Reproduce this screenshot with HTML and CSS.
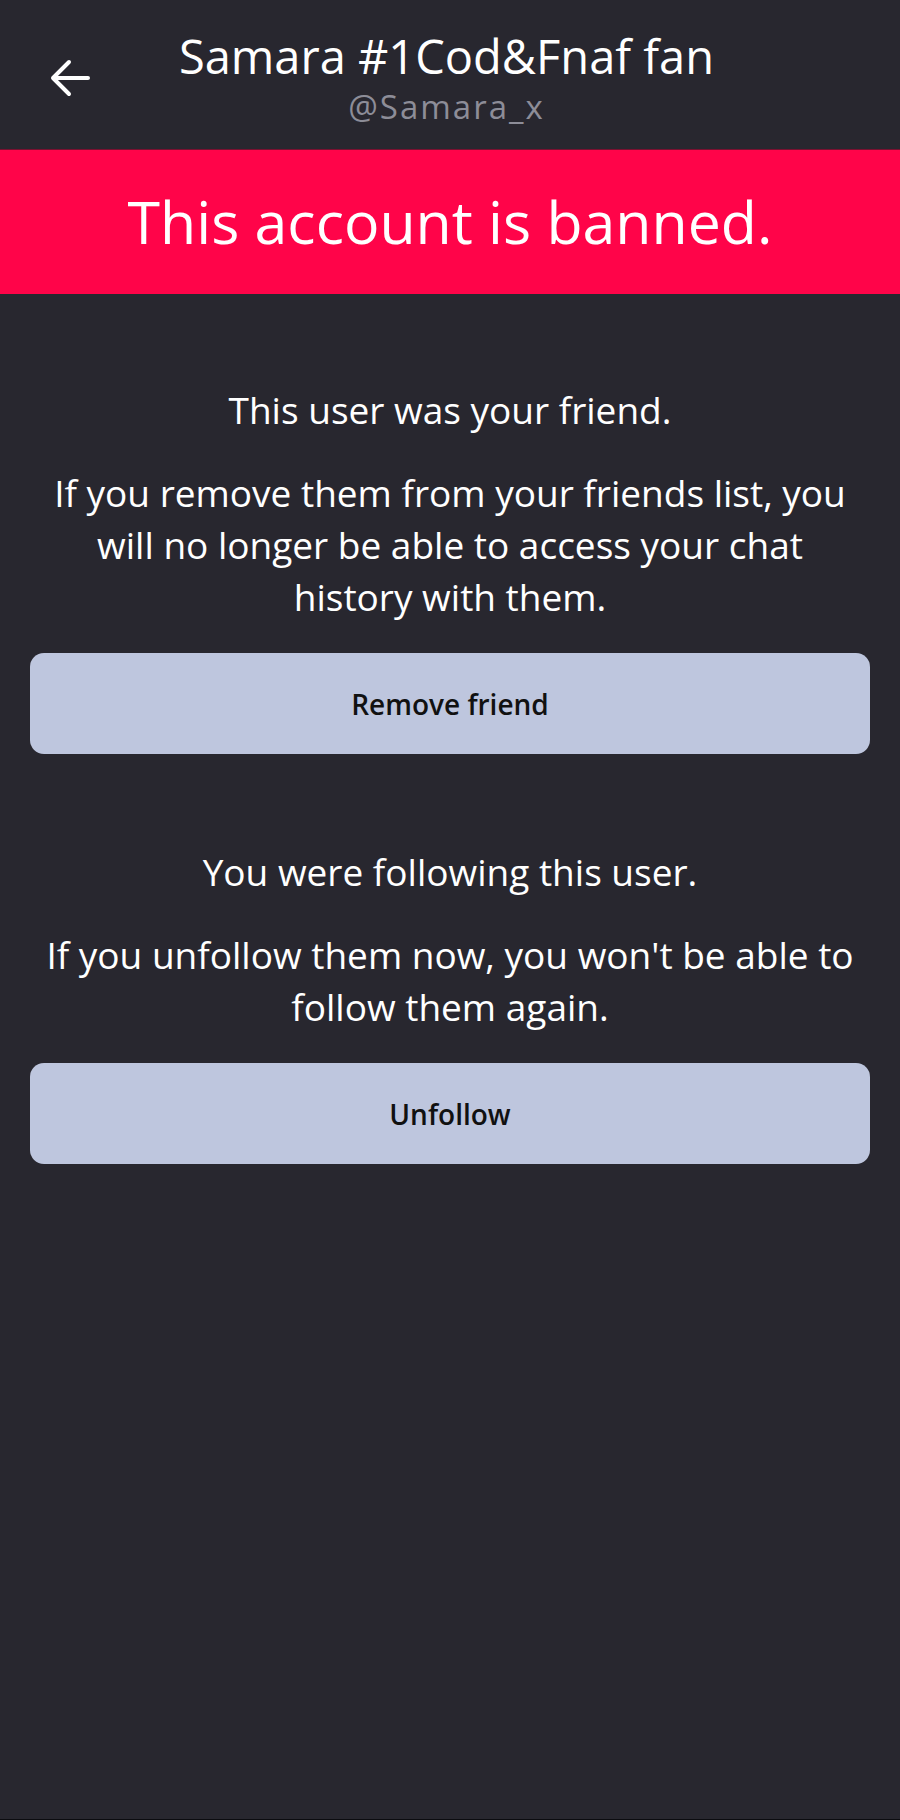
FILE: index.html
```html
<!DOCTYPE html>
<html lang="en">
<head>
    <meta charset="UTF-8">
    <meta name="viewport" content="width=device-width, initial-scale=1.0">
    <title>Samara #1Cod&amp;Fnaf fan</title>
    <link rel="stylesheet" href="styles.css">
</head>
<body>
    <div class="header">
        <div class="back">
            <svg width="40" height="40" viewBox="0 0 40 40">
                <path d="M38 20H3M19 4L3 20l16 16" fill="none" stroke="#fff" stroke-width="4" stroke-linecap="round" stroke-linejoin="round"/>
            </svg>
        </div>
        <div class="title-block">
            <div class="title">Samara #1Cod&amp;Fnaf fan</div>
            <div class="handle">@Samara_x</div>
        </div>
        <div></div>
    </div>

    <!-- Banned banner -->
    <div class="banner">This account is banned.</div>

    <div class="content">
        <div class="section">
            <p class="lead">This user was your friend.</p>
            <p class="info">If you remove them from your friends list, you will no longer be able to access your chat history with them.</p>
            <button class="action">Remove friend</button>
        </div>

        <div class="section">
            <p class="lead">You were following this user.</p>
            <p class="info">If you unfollow them now, you won't be able to follow them again.</p>
            <button class="action">Unfollow</button>
        </div>
    </div>
</body>
</html>
```

FILE: styles.css
```css
html, body {
    height: 100%;
}
body {
    margin: 0;
    background-color: #28272f;
    color: white;
    font-family: "Open Sans", Lato, sans-serif;
    text-align: center;
    border-bottom: 1px solid #0c0c10;
    box-sizing: border-box;
}
.header {
    height: 149px;
    box-sizing: border-box;
    padding-top: 30px;
    display: grid;
    grid-template-columns: 1fr auto 1fr;
}
.back {
    padding-left: 50px;
    padding-top: 28px;
    text-align: left;
}
.title-block {
    margin-right: 7px;
}
.title {
    font-size: 47px;
    line-height: 52px;
}
.handle {
    margin-top: 7px;
    font-size: 33px;
    line-height: 36px;
    letter-spacing: 2px;
    color: #8d8d98;
}
.banner {
    background-color: #ff0449;
    height: 145px;
    line-height: 142px;
    font-size: 59px;
    border-top: 1px solid #7a1030;
    box-sizing: border-box;
}
.content {
    padding: 90px 30px 0;
}
.section {
    margin-bottom: 92px;
}
.lead, .info {
    margin: 0;
    font-size: 37px;
    line-height: 52px;
}
.info {
    margin: 31px 10px 0;
}
.action {
    display: block;
    width: 100%;
    height: 101px;
    margin-top: 30px;
    border: none;
    border-radius: 14px;
    background-color: #bec6de;
    color: #111;
    font-family: "Open Sans", sans-serif;
    font-size: 28px;
    font-weight: 600;
    cursor: pointer;
}
```
